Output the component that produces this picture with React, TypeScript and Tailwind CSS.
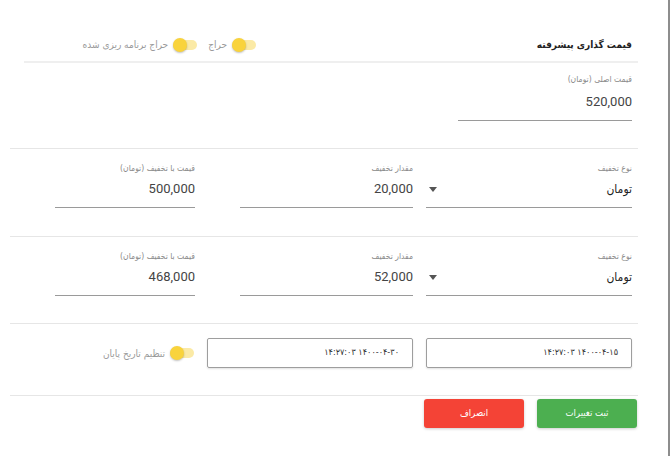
import React from 'react';

const fa = '"DejaVu Sans Condensed", "DejaVu Sans", sans-serif';

const Toggle: React.FC = () => (
  <span className="relative inline-flex h-[14px] w-[26px] shrink-0 items-center">
    <span className="absolute inset-x-[1px] top-[2px] h-[10px] rounded-full bg-[#fbeaa6]" />
    <span className="absolute right-[11px] top-0 h-[14px] w-[14px] rounded-full bg-[#f9d33c] shadow-[0_1px_2px_rgba(0,0,0,0.25)]" />
  </span>
);

const Field: React.FC<{ label: string; value: string; width: string; select?: boolean }> = ({ label, value, width, select }) => (
  <div className={`${width} shrink-0`}>
    <div className="h-[12px] text-[8.5px] leading-[12px] text-[#8a8a8a]" style={{ fontFamily: fa }}>{label}</div>
    <div className="mt-[7px] flex items-center justify-between border-b border-[#9a9a9a] pb-[10px]">
      {select ? (
        <span className="h-[16px] text-[12px] leading-[16px] text-[#222]" style={{ fontFamily: fa }}>{value}</span>
      ) : (
        <span className="h-[16px] text-[13px] leading-[16px] text-[#444]">{value}</span>
      )}
      {select && (
        <svg width="8" height="5" viewBox="0 0 8 5" className="ml-[3px]">
          <path d="M0 0h8L4 5z" fill="#555" />
        </svg>
      )}
    </div>
  </div>
);

const DiscountRow: React.FC<{ amount: string; result: string }> = ({ amount, result }) => (
  <div className="flex gap-[13px] pr-[6px]">
    <Field label="نوع تخفیف" value="تومان" width="w-[206px]" select />
    <Field label="مقدار تخفیف" value={amount} width="w-[173px]" />
    <div className="mr-[32px]">
      <Field label="قیمت با تخفیف (تومان)" value={result} width="w-[140px]" />
    </div>
  </div>
);

const DateBox: React.FC<{ value: string }> = ({ value }) => (
  <div className="flex h-[30px] w-[206px] shrink-0 items-center rounded-[2px] border border-[#9e9e9e] pr-[13px] shadow-[0_1px_2px_rgba(0,0,0,0.12)]">
    <span dir="ltr" className="text-[9px] text-[#333]" style={{ unicodeBidi: 'isolate', fontFamily: fa }}>{value}</span>
  </div>
);

export default function App() {
  return (
    <div className="relative h-[456px] w-[670px] overflow-hidden bg-white" style={{ fontFamily: 'Roboto, "DejaVu Sans", sans-serif' }}>
      <div className="absolute right-0 top-0 h-full w-[2px] bg-[#8d8d8d]" />
      <div dir="rtl" className="pl-[10px] pr-[32px] pt-[28px]">
        {/* هدر */}
        <div className="ml-[14px] flex h-[35px] items-center justify-between border-b-[2px] border-[#efefef] pl-[56px] pr-[6px]">
          <span className="text-[10px] font-bold text-[#222]" style={{ fontFamily: fa }}>قیمت گذاری پیشرفته</span>
          <div className="flex w-[177px] items-center" style={{ fontFamily: fa }}>
            <Toggle />
            <span className="mr-[4px] text-[10px] text-[#9a9a9a]">حراج</span>
            <span className="mr-[10px] inline-flex"><Toggle /></span>
            <span className="mr-[4px] text-[10px] text-[#9a9a9a]">حراج برنامه ریزی شده</span>
          </div>
        </div>

        {/* قیمت اصلی */}
        <div className="pr-[6px] pt-[10px]">
          <div className="h-[12px] text-[8.5px] leading-[12px] text-[#8a8a8a]" style={{ fontFamily: fa }}>قیمت اصلی (تومان)</div>
          <div className="mt-[9px] w-[174px] border-b border-[#9a9a9a] pb-[10px]">
            <span className="block h-[16px] text-[13px] leading-[16px] text-[#444]">520,000</span>
          </div>
        </div>

        <div className="mt-[27px] border-t border-[#e6e6e6] pt-[13px]">
          <DiscountRow amount="20,000" result="500,000" />
        </div>

        <div className="mt-[28px] border-t border-[#e6e6e6] pt-[13px]">
          <DiscountRow amount="52,000" result="468,000" />
        </div>

        {/* تاریخ‌ها */}
        <div className="mt-[27px] border-t border-[#e6e6e6] pt-[14px]">
          <div className="flex items-center gap-[13px] pr-[6px]">
            <DateBox value="۱۴:۲۷:۰۳ ۱۴۰۰-۰۴-۱۵" />
            <DateBox value="۱۴:۲۷:۰۳ ۱۴۰۰-۰۴-۳۰" />
            <div className="mr-[-1px] flex items-center" style={{ fontFamily: fa }}>
              <Toggle />
              <span className="mr-[4px] text-[10px] text-[#9a9a9a]">تنظیم تاریخ پایان</span>
            </div>
          </div>
        </div>

        {/* دکمه‌ها */}
        <div className="mt-[27px] border-t border-[#e6e6e6] pt-[3px]">
          <div className="flex gap-[13px] pr-[1px]" style={{ fontFamily: fa }}>
            <button className="h-[29px] w-[100px] rounded-[3px] bg-[#4caf50] text-[9.5px] text-white shadow-[0_1px_3px_rgba(0,0,0,0.2)]">ثبت تغییرات</button>
            <button className="h-[29px] w-[100px] rounded-[3px] bg-[#f44336] text-[9.5px] text-white shadow-[0_1px_3px_rgba(0,0,0,0.2)]">انصراف</button>
          </div>
        </div>
      </div>
    </div>
  );
}
